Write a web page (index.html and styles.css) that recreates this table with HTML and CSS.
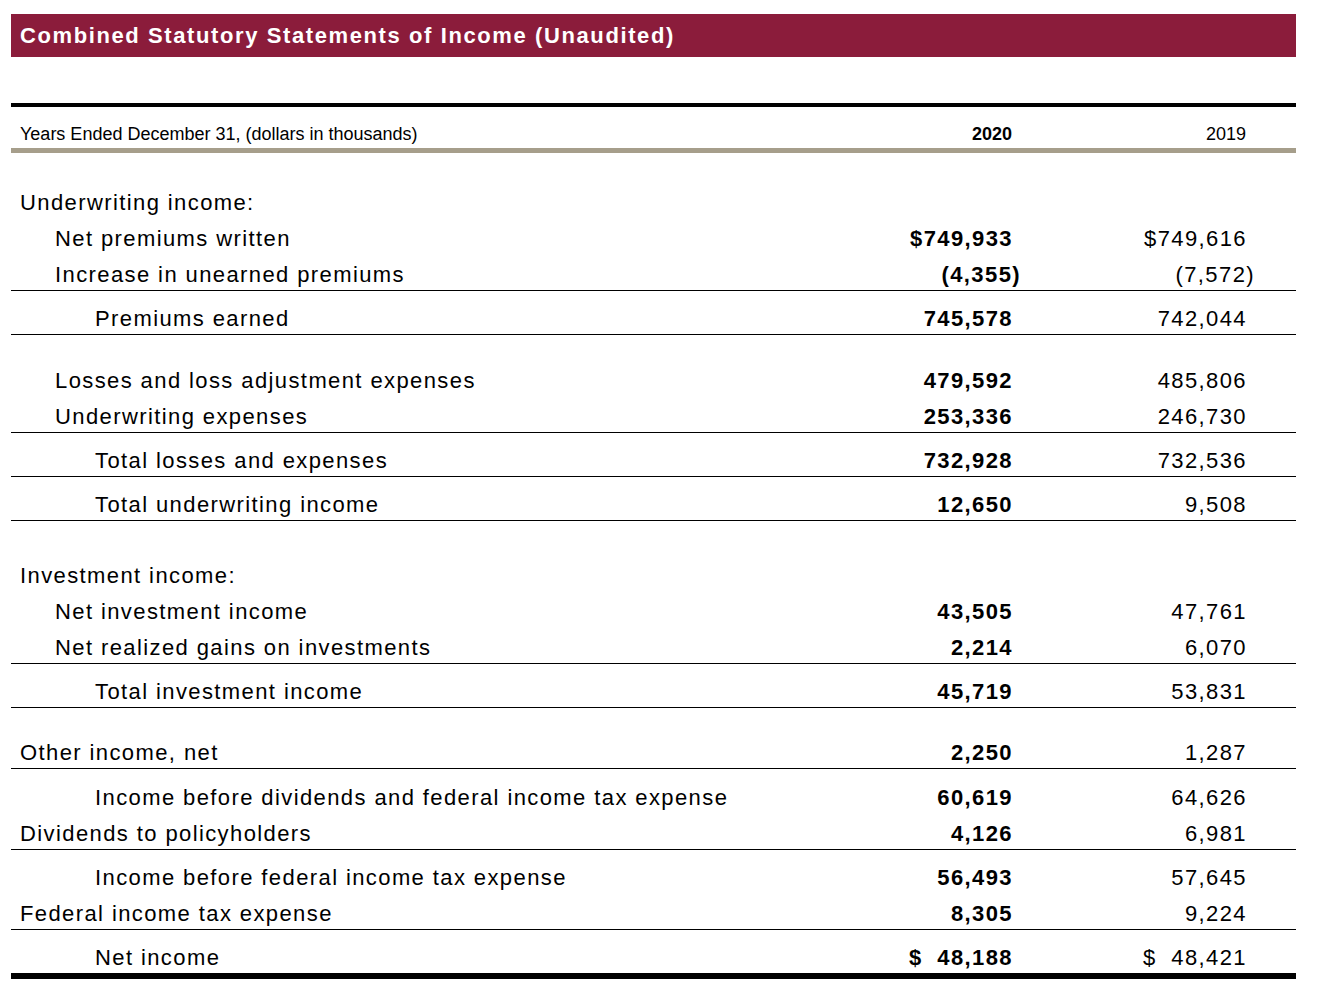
FILE: index.html
```html
<!DOCTYPE html>
<html lang="en">
<head>
<meta charset="utf-8">
<title>Combined Statutory Statements of Income (Unaudited)</title>
<link rel="stylesheet" href="styles.css">
</head>
<body>
<div class="page">
  <div class="title">Combined Statutory Statements of Income (Unaudited)</div>

  <div class="head">
    <div class="head-label">Years Ended December 31, (dollars in thousands)</div>
    <div class="num b">2020</div>
    <div class="num">2019</div>
  </div>

  <div class="row first"><div class="lbl l0">Underwriting income:</div><div></div><div></div></div>
  <div class="row"><div class="lbl l1">Net premiums written</div><div class="num b">$749,933</div><div class="num">$749,616</div></div>
  <div class="row rule"><div class="lbl l1">Increase in unearned premiums</div><div class="num b">(4,355<span class="rp">)</span></div><div class="num">(7,572<span class="rp">)</span></div></div>
  <div class="row rule after"><div class="lbl l2">Premiums earned</div><div class="num b">745,578</div><div class="num">742,044</div></div>

  <div class="row sec1"><div class="lbl l1">Losses and loss adjustment expenses</div><div class="num b">479,592</div><div class="num">485,806</div></div>
  <div class="row rule"><div class="lbl l1">Underwriting expenses</div><div class="num b">253,336</div><div class="num">246,730</div></div>
  <div class="row rule after"><div class="lbl l2">Total losses and expenses</div><div class="num b">732,928</div><div class="num">732,536</div></div>
  <div class="row rule after"><div class="lbl l2">Total underwriting income</div><div class="num b">12,650</div><div class="num">9,508</div></div>

  <div class="row sec2"><div class="lbl l0">Investment income:</div><div></div><div></div></div>
  <div class="row"><div class="lbl l1">Net investment income</div><div class="num b">43,505</div><div class="num">47,761</div></div>
  <div class="row rule"><div class="lbl l1">Net realized gains on investments</div><div class="num b">2,214</div><div class="num">6,070</div></div>
  <div class="row rule after"><div class="lbl l2">Total investment income</div><div class="num b">45,719</div><div class="num">53,831</div></div>

  <div class="row rule sec3"><div class="lbl l0">Other income, net</div><div class="num b">2,250</div><div class="num">1,287</div></div>
  <div class="row after wide"><div class="lbl l2">Income before dividends and federal income tax expense</div><div class="num b">60,619</div><div class="num">64,626</div></div>
  <div class="row rule"><div class="lbl l0">Dividends to policyholders</div><div class="num b">4,126</div><div class="num">6,981</div></div>
  <div class="row after"><div class="lbl l2">Income before federal income tax expense</div><div class="num b">56,493</div><div class="num">57,645</div></div>
  <div class="row rule"><div class="lbl l0">Federal income tax expense</div><div class="num b">8,305</div><div class="num">9,224</div></div>
  <div class="row total after"><div class="lbl l2">Net income</div><div class="num b split"><span>$</span><span>48,188</span></div><div class="num split"><span>$</span><span>48,421</span></div></div>
</div>
</body>
</html>
```

FILE: styles.css
```css
html, body {
  margin: 0;
  padding: 0;
  background: #ffffff;
}

body {
  font-family: "Liberation Sans", Arial, Helvetica, sans-serif;
  color: #000000;
}

.page {
  padding: 14px 21px 20px 11px;
  width: 1285px;
}

.title {
  background: #8b1c3b;
  color: #ffffff;
  font-weight: 700;
  font-size: 22px;
  letter-spacing: 1.6px;
  height: 43px;
  line-height: 42px;
  padding: 1px 0 0 9px;
  box-sizing: border-box;
}

.head {
  margin-top: 46px;
  border-top: 4px solid #000000;
  border-bottom: 5px solid #a69e8b;
  display: grid;
  grid-template-columns: 1fr 104px 104px;
  column-gap: 130px;
  padding: 17px 50px 4px 0;
  font-size: 18px;
  line-height: 20px;
}

.head-label {
  padding-left: 9px;
}

.row {
  display: grid;
  grid-template-columns: 1fr 104px 104px;
  column-gap: 130px;
  padding-right: 49px;
  font-size: 22px;
  line-height: 30px;
  letter-spacing: 1.4px;
  margin-top: 6px;
  white-space: nowrap;
}

.row.rule {
  border-bottom: 1px solid #000000;
}

.row.after {
  margin-top: 13px;
}

.row.after.wide {
  margin-top: 14px;
}

.row.first {
  margin-top: 35px;
}

.row.sec1 {
  margin-top: 31px;
}

.row.sec2 {
  margin-top: 40px;
}

.row.sec3 {
  margin-top: 30px;
}

.row.total {
  border-bottom: 6px solid #000000;
}

.lbl.l0 {
  padding-left: 9px;
}

.lbl.l1 {
  padding-left: 44px;
}

.lbl.l2 {
  padding-left: 84px;
}

.num {
  text-align: right;
}

.head .num {
  letter-spacing: 0;
}

.b {
  font-weight: 700;
}

.rp {
  margin-right: -8px;
}

.split {
  display: flex;
  justify-content: space-between;
}
```
